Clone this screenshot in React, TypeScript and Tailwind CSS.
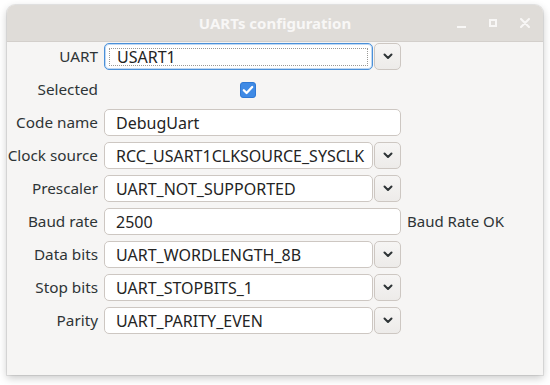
import React from "react";

const font = { fontFamily: '"Noto Sans", "DejaVu Sans", sans-serif' };

function Chevron() {
  return (
    <svg width="10" height="7" viewBox="0 0 10 7" fill="none">
      <path d="M1.5 1.5 L5 5 L8.5 1.5" stroke="#2e3436" strokeWidth="2" strokeLinecap="round" strokeLinejoin="round" />
    </svg>
  );
}

function Label({ children }: { children: React.ReactNode }) {
  return <div className="w-[91px] shrink-0 flex justify-end text-[15.3px] text-[#2e3436] leading-none whitespace-nowrap">{children}</div>;
}

function Entry({ value, focused }: { value: string; focused?: boolean }) {
  return (
    <div
      className={
        "flex-1 h-[27px] rounded-[5px] bg-white flex items-center text-[16px] text-[#242424] leading-none " +
        (focused ? "border border-[#4a90d9] shadow-[inset_0_0_0_1px_rgba(74,144,217,0.35)]" : "border border-[#cdc7c2]")
      }
    >
      {focused ? (
        <div className="ml-[4px] mr-[4px] flex-1 h-[18px] border border-dotted border-[#9a9996] flex items-center pl-[7px]">
          {value}
        </div>
      ) : (
        <span className="pl-[11px]">{value}</span>
      )}
    </div>
  );
}

function Combo({ value, focused }: { value: string; focused?: boolean }) {
  return (
    <div className="w-[297px] flex items-center gap-[1px]">
      <Entry value={value} focused={focused} />
      <div className="w-[27px] h-[27px] rounded-[5px] border border-[#cdc7c2] bg-gradient-to-b from-[#f6f5f4] to-[#edebe9] flex items-center justify-center shrink-0">
        <Chevron />
      </div>
    </div>
  );
}

function Row({ label, children }: { label: string; children: React.ReactNode }) {
  return (
    <div className="flex items-center h-[27px]">
      <Label>{label}</Label>
      <div className="ml-[6px] flex items-center">{children}</div>
    </div>
  );
}

export default function App() {
  return (
    <div className="w-[550px] h-[385px] bg-white pt-[5px] pl-[7px]" style={font}>
      <div className="w-[536px] h-[370px] rounded-t-[8px] bg-[#f6f5f4] shadow-[0_0_0_1px_rgba(0,0,0,0.08),0_3px_8px_rgba(0,0,0,0.22)] flex flex-col overflow-hidden">
        <div className="h-[37px] bg-[#dfdcd8] border-b border-[#d3cfcb] flex items-center relative shrink-0">
          <div className="flex-1 text-center text-[15px] font-bold text-[#f8f7f6]">UARTs configuration</div>
          <div className="absolute right-0 top-0 h-full flex items-center">
            <div className="w-[32px] flex justify-center">
              <div className="w-[9px] h-[2px] bg-[#f8f7f6] mt-[7px]" />
            </div>
            <div className="w-[32px] flex justify-center">
              <div className="w-[8px] h-[8px] border-2 border-[#f8f7f6]" />
            </div>
            <div className="w-[34px] flex justify-center pr-[2px]">
              <svg width="10" height="10" viewBox="0 0 10 10">
                <path d="M1 1 L9 9 M9 1 L1 9" stroke="#f8f7f6" strokeWidth="2" strokeLinecap="round" />
              </svg>
            </div>
          </div>
        </div>
        <div className="flex flex-col gap-[6px] pt-[1px]">
          <Row label="UART">
            <Combo value="USART1" focused />
          </Row>
          <Row label="Selected">
            <div className="w-[297px] flex justify-center pr-[10px]">
              <div className="w-[16px] h-[16px] rounded-[3px] bg-[#3f8ae5] border border-[#2f78d4] flex items-center justify-center">
                <svg width="12" height="10" viewBox="0 0 12 10">
                  <path d="M1.8 5.2 L4.6 8 L10.2 2" stroke="white" strokeWidth="2.3" fill="none" strokeLinecap="round" strokeLinejoin="round" />
                </svg>
              </div>
            </div>
          </Row>
          <Row label="Code name">
            <div className="w-[297px] flex">
              <Entry value="DebugUart" />
            </div>
          </Row>
          <Row label="Clock source">
            <Combo value="RCC_USART1CLKSOURCE_SYSCLK" />
          </Row>
          <Row label="Prescaler">
            <Combo value="UART_NOT_SUPPORTED" />
          </Row>
          <Row label="Baud rate">
            <div className="w-[297px] flex">
              <Entry value="2500" />
            </div>
            <span className="ml-[6px] text-[15px] text-[#2e3436] leading-none whitespace-nowrap">Baud Rate OK</span>
          </Row>
          <Row label="Data bits">
            <Combo value="UART_WORDLENGTH_8B" />
          </Row>
          <Row label="Stop bits">
            <Combo value="UART_STOPBITS_1" />
          </Row>
          <Row label="Parity">
            <Combo value="UART_PARITY_EVEN" />
          </Row>
        </div>
      </div>
    </div>
  );
}
